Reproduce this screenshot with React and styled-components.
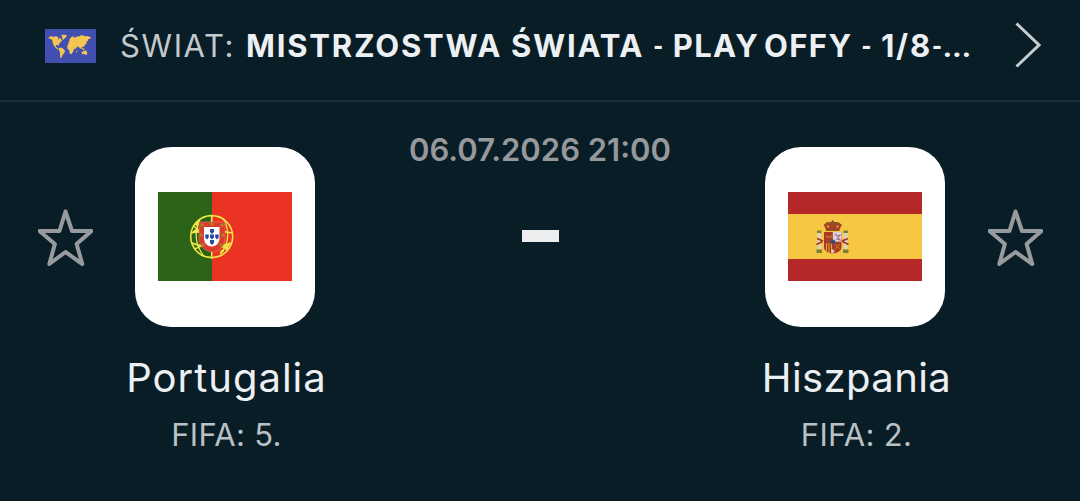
import React from 'react'
import styled, {createGlobalStyle} from 'styled-components'

const GlobalStyle = createGlobalStyle`
  body {
    margin: 0;
    background: #091d27;
    font-family: Inter, "Liberation Sans", sans-serif;
  }
`

function WorldFlag() {
  return (
    <WorldIcon viewBox="0 0 153 102">
      <path fill="#4150b0" d="M0 0h153v102H0z" />
      <g fill="#f4c552">
        <path d="M11 24l8-2 6 1 8-1 5 1 3 5-3 4 4-1 2-5 5 4 2 6-5 4-4 6-2 5-3-3-5 1 2 5 4 4 3 2-1 2-7-4-6-8-4-8-1-8-4-4-6-1z" />
        <path d="M49 18l7-1 9 1-1 6-5 4-3 5-4-4-1-6z" />
        <path d="M43 56l7 0 6 4 4 5-2 7-4 4-3 6-2 5-3-1-1-9 0-8-4-7z" />
        <path d="M67 49l5-4 6 1 5 2 3 6 4 1-4 8-2 6-5 7-4-1-2-6-1-7-5-3z" />
        <path d="M70 42l3-6 1-6 5-6 5-2 4 4 6-3 9-1 7-4 8 3 11 1 9 3-2 4-6 1-1 5-4 3-1 6-5 5-4 6-4-1-5 6-4-5-6-3-1 5-6 3-5-7-6-3-7 0z" />
        <path d="M108 55l5 3 6 1-1 4-7-2zM110 70l6-5 4 1 2-3 4 6 1 7-5 2-4-3-7 1zM94 65l3-2-1 7-3 1z" />
      </g>
    </WorldIcon>
  )
}

function PortugalFlag() {
  return (
    <Flag viewBox="0 0 134 89">
      <path fill="#2b6318" d="M0 0h54v89H0z" />
      <path fill="#ea3323" d="M54 0h80v89H54z" />
      <g fill="none" stroke="#f0e845" strokeWidth="1.6">
        <circle cx="53.7" cy="44.6" r="21" />
        <path d="M53.7 23.5v43M33 41c13-3 28-3 41 0M34 51c12 5 27 5 39 0" />
        <path strokeWidth="1.3" d="M36 34c9 10 22 20 35 23M42 28c-6 11-5 24 3 35M66 28c6 11 5 24-4 34M36 57c7-2 13-6 18-12" />
      </g>
      <path fill="#f0e845" d="M36 32l5-5-1 8zM34 40l6-5 1 6zM66 55l7-4-5 8zM62 59l5-2-3 5z" />
      <path fill="#dd3a2c" stroke="#d9a488" strokeWidth=".4" d="M41 30h26v16c0 9-6 13-13 14-7-1-13-5-13-14z" />
      <path fill="#fff" d="M46 35h15.500v11c0 5-3 8-7.750 8.500-4.750-.5-7.750-3.500-7.750-8.500z" />
      <g fill="#264aa5">
        <path d="M52 37h4v3l-2 2-2-2zM52 42.500h4v3l-2 2-2-2zM52 48h4v3l-2 2-2-2zM47.200 42.500h3.500v3l-1.700 2-1.800-2zM57.200 42.500h3.500v3l-1.700 2-1.800-2z" />
      </g>
      <g fill="#a8842c">
        <path d="M42.500 31.500h3v3h-3zM52.200 31h3v2.500h-3zM62.500 31.500h3v3h-3zM42 41.500h2.500v3H42zM63.500 41.500h2.500v3h-2.500zM43.500 51.500h3v3h-3zM61.500 51.500h3v3h-3z" />
      </g>
    </Flag>
  )
}

function SpainFlag() {
  return (
    <Flag viewBox="0 0 134 89">
      <path fill="#b42828" d="M0 0h134v89H0z" />
      <path fill="#f7c744" d="M0 22h134v45H0z" />
      {/* pillars */}
      <path fill="#d9d4c0" d="M29.500 41h3.500v16h-3.500zM56 41h3.500v16H56z" />
      <path fill="#77823b" d="M29 38.500h4.500V41H29zM55.500 38.500H60V41h-4.500zM28.500 57.500h5.500v3.500h-5.500zM55 57.500h5.500v3.500H55z" />
      <path fill="none" stroke="#a83228" strokeWidth="1.700" d="M28.500 52.500l6-3M29 46.500l6 2.500M60.500 52.500l-6-3M60 46.500l-6 2.500" />
      {/* crown */}
      <path fill="#a74427" d="M36 33c2-4 15-4 17.500 0l-2 5h-13.500z" />
      <path fill="none" stroke="#805a20" strokeWidth="1" d="M36 34c2-5 7-4 8.700-1 1.800-3 7-4 8.800 1M44.700 28v6M38 38.500h13.500M43.400 29.500h2.600" />
      <circle cx="40" cy="34.500" r="1" fill="#f0b940" />
      <circle cx="49.500" cy="34.500" r="1" fill="#f0b940" />
      {/* shield */}
      <path fill="#a93a25" d="M36 40h17.500v15c0 4-4 6-8.750 6.500-4.750-.5-8.750-2.500-8.750-6.500z" />
      <path fill="#ded3d8" d="M44.800 40h8.700v9.700h-8.700z" />
      <path fill="none" stroke="#a873a0" strokeWidth="1.200" d="M47 42l2 2 3-1-2 3 2 2-4-1" />
      <path fill="none" stroke="#deb034" strokeWidth="1" d="M38.500 51v8M41 51v9.500M43.500 51v10" />
      <path fill="none" stroke="#c88532" strokeWidth=".9" d="M47 52l5 5M52 52l-5 5M39 45h4M39 43v3M43 43v3" />
      <circle cx="44.800" cy="49.800" r="2.400" fill="#3d4c72" />
      <path fill="#d7ccb0" d="M43 59l1.800-2 1.800 2-1.800 3z" />
    </Flag>
  )
}

function FavouriteStar() {
  return (
    <StarIcon viewBox="0 0 55 57">
      <path d="M27.500 2.500L34 22H53.500L38.600 35L44.300 55L27.500 43L11.300 55L16.900 35L1.500 22H21.500Z" />
    </StarIcon>
  )
}

function Team({name, rank, flag, home}) {
  return (
    <TeamRow $home={home}>
      <FavouriteStar />
      <TeamInfo>
        <FlagTile>{flag}</FlagTile>
        <TeamName $home={home}>{name}</TeamName>
        <TeamRank>FIFA: {rank}.</TeamRank>
      </TeamInfo>
    </TeamRow>
  )
}

function App() {
  return (
    <Container>
      <GlobalStyle />
      <Header>
        <WorldFlag />
        <Country>ŚWIAT:</Country>
        <Stage>
          MISTRZOSTWA ŚWIATA <Hyphen>-</Hyphen> <Round>PLAY OFFY</Round> <Hyphen>-</Hyphen> 1/8<Hyphen>-</Hyphen><Dots>...</Dots>
        </Stage>
        <Chevron viewBox="0 0 26 46">
          <path d="M1.500 1.500L24 23L1.500 44.500" />
        </Chevron>
      </Header>
      <Match>
        <Team home name="Portugalia" rank={5} flag={<PortugalFlag />} />
        <Score>
          <Kickoff>06.07.2026 21:00</Kickoff>
          <Dash />
        </Score>
        <Team name="Hiszpania" rank={2} flag={<SpainFlag />} />
      </Match>
    </Container>
  )
}

export default App


const Container = styled.div`
  box-sizing: border-box;
  width: 1080px;
  height: 501px;
  overflow: hidden;
  background: #091d27;
  border-bottom: 1px solid #06151d;
`

const Header = styled.header`
  display: flex;
  box-sizing: border-box;
  height: 102px;
  padding: 22px 39px 0 45px;
  border-bottom: 2px solid #1b2d37;
  font-size: 31px;
  line-height: 48px;
  white-space: nowrap;
`

const WorldIcon = styled.svg`
  flex: none;
  width: 51px;
  height: 34px;
  margin-top: 7px;
`

const Country = styled.span`
  width: 126px;
  margin-left: 24px;
  color: #c3cacd;
  letter-spacing: 1.6px;
`

const Stage = styled.span`
  flex: 1;
  color: #edf0f2;
  font-weight: 650;
  letter-spacing: 1.8px;
  word-spacing: -0.5px;
`

const Round = styled.span`
  letter-spacing: 1.4px;
  word-spacing: -4px;
`

const Hyphen = styled.span`
  font-family: Roboto, sans-serif;
  font-size: 25px;
  font-weight: 800;
  letter-spacing: 0.5px;
  line-height: 1;
  vertical-align: 2px;
`

const Dots = styled.span`
  font-family: Roboto, sans-serif;
  font-weight: 700;
  letter-spacing: 0.6px;
`

const Chevron = styled.svg`
  flex: none;
  width: 26px;
  height: 46px;
  fill: none;
  stroke: #c5cdd1;
  stroke-width: 3;
`

const Match = styled.main`
  display: flex;
  padding: 45px 37px 0 38px;
`

const TeamRow = styled.section`
  display: flex;
  flex-direction: ${({$home}) => ($home ? 'row' : 'row-reverse')};
  gap: ${({$home}) => ($home ? '22px' : '23px')};
`

const StarIcon = styled.svg`
  width: 55px;
  height: 57px;
  margin-top: 62px;
  fill: none;
  stroke: #989b9d;
  stroke-width: 4;
  stroke-linejoin: round;
`

const TeamInfo = styled.div`
  display: flex;
  flex-direction: column;
  align-items: center;
  width: 220px;
`

const FlagTile = styled.div`
  display: flex;
  align-items: flex-start;
  justify-content: center;
  box-sizing: border-box;
  width: 180px;
  height: 180px;
  padding-top: 45px;
  border-radius: 36px;
  background: #fff;
`

const Flag = styled.svg`
  width: 134px;
  height: 89px;
`

const TeamName = styled.h2`
  margin: 26px 0 0;
  padding-left: 3px;
  color: #edf0f2;
  font-size: 40px;
  font-weight: 400;
  line-height: 50px;
  letter-spacing: ${({$home}) => ($home ? '1px' : '0.4px')};
  white-space: nowrap;
`

const TeamRank = styled.p`
  margin: 12px 0 0;
  padding-left: 3px;
  color: #b9c1c5;
  font-size: 31px;
  line-height: 40px;
  letter-spacing: 0.3px;
`

const Score = styled.div`
  display: flex;
  flex: 1;
  flex-direction: column;
  align-items: center;
`

const Kickoff = styled.time`
  margin-top: -17px;
  color: #96999c;
  font-size: 31px;
  font-weight: 600;
  line-height: 40px;
  letter-spacing: 0;
  white-space: nowrap;
`

const Dash = styled.div`
  width: 37px;
  height: 12px;
  margin-top: 60px;
  background: #ecedee;
`
